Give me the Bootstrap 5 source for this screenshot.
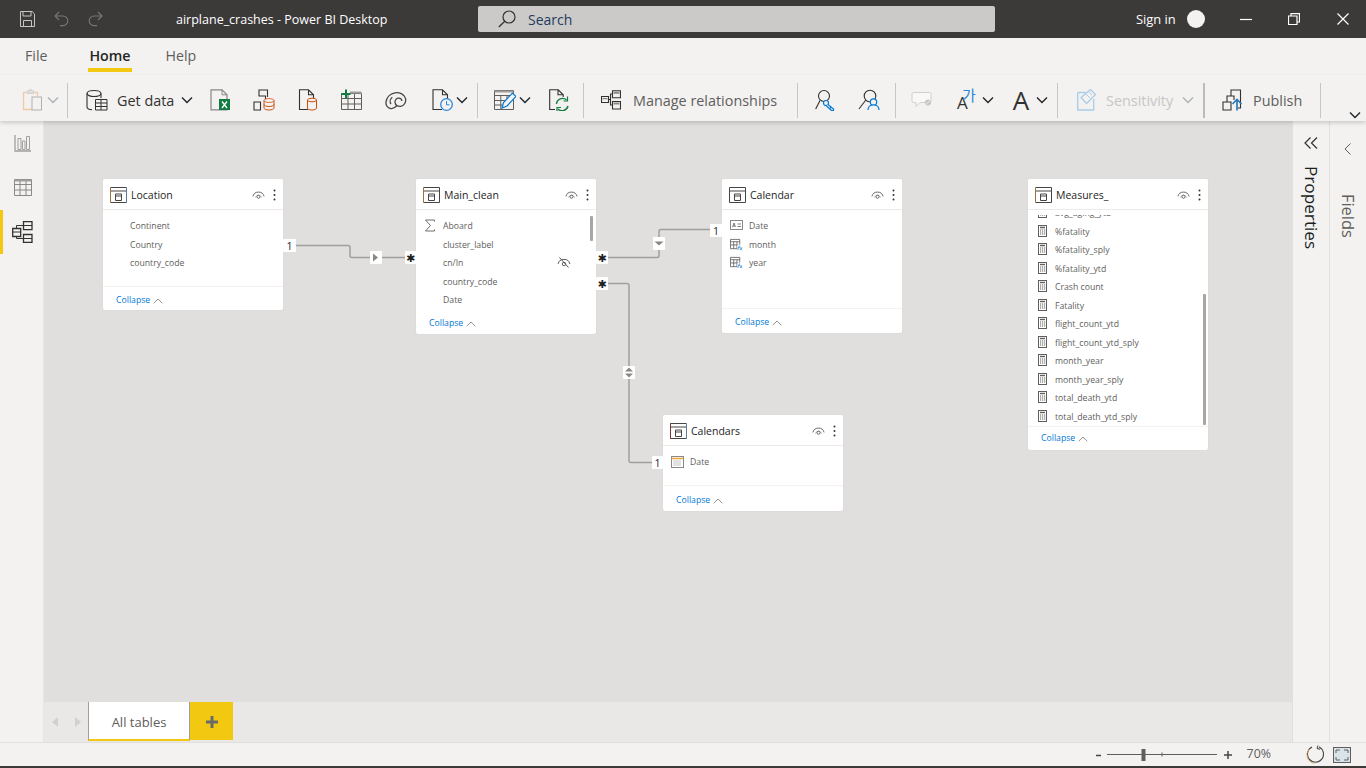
<!DOCTYPE html>
<html lang="en">
<head>
<meta charset="utf-8">
<title>airplane_crashes - Power BI Desktop</title>
<link href="https://cdn.jsdelivr.net/npm/bootstrap@5.3.0/dist/css/bootstrap.min.css" rel="stylesheet">
<style>
html,body{height:100%}
body{font-family:"Open Sans","Noto Sans",sans-serif;background:#f3f2f1;color:#252423;overflow:hidden}
svg{display:block;flex:none}
.titlebar{height:38px;background:#3b3a39;color:#fff;font-size:12.5px;flex:none}
.tb-ic{margin-left:20px;margin-right:19px}
.tb-ic+.tb-ic{margin-left:0}
.tb-title{margin-left:54px;width:302px;white-space:nowrap;padding-top:3px}
.searchbox{width:517px;height:26px;background:#cbcac8;border-radius:2px;color:#243a5e;font-size:14px;padding-left:20px;gap:12px;margin-top:0}
.searchbox span{padding-top:1px}
.signin{margin-left:141px;font-size:12.900px;width:51px;white-space:nowrap;padding-top:1px}
.avatar{width:18px;height:18px;border-radius:50%;background:#f3f2f1}
.winbtn{margin-left:35px}
.winbtn.mid{margin-left:36px}
.winbtn.last{margin-left:37px}
.tabrow{height:37px;flex:none;font-size:14.2px;padding-left:25px;color:#605e5c}
.tabitem{position:relative;height:37px;line-height:36px}
.tabitem.active{color:#252423;font-weight:600;margin-left:42px;margin-right:35px}
.tabitem.active::after{content:"";position:absolute;left:-1px;right:-1px;top:30px;height:4px;background:#f2c811}
.ribbon{height:46px;flex:none;padding-left:22px;padding-top:4px;position:relative;z-index:3;box-shadow:0 2px 4px rgba(0,0,0,.16);background:#f3f2f1;font-size:14.4px}
.rsep{width:1px;height:35px;background:#c8c6c4;flex:none}
.rsep.thick{width:2px;background:#bdbbb9}
.rtext{white-space:nowrap;flex:none;color:#323130;padding-top:1px}
.rtext.muted{color:#605e5c}
.rtext.off{color:#c8c6c4}
.w58{width:58px}.w146{width:146px}.w69{width:69px}.w50{width:50px}
.m2{margin-left:2px}.m3{margin-left:3px}.m5{margin-left:5px}.m6{margin-left:6px}.m7{margin-left:7px}.m8{margin-left:8px}.m9{margin-left:9px}.m12{margin-left:12px}.m14{margin-left:14px}.m15{margin-left:15px}.m16{margin-left:16px}.m17{margin-left:17px}.m18{margin-left:18px}.m19{margin-left:19px}.m21{margin-left:21px}.m23{margin-left:23px}.m24{margin-left:24px}.m25{margin-left:25px}.m35{margin-left:35px}
.ribbon-more{position:absolute;right:5px;bottom:2px}
.glyph-ko{width:20px;height:22px;position:relative;flex:none}
.glyph-ko .a{position:absolute;left:0;top:3px;font-size:17px;line-height:22px;color:#323130;font-family:"Open Sans",sans-serif}
.glyph-ko .k{position:absolute;left:5px;top:-3px;font-size:15px;line-height:18px;color:#2b88d8;font-family:"Noto Sans CJK KR",sans-serif}
.glyph-a{width:18px;height:26px;flex:none;font-size:26px;line-height:26px;color:#323130;text-align:center}
.rail{width:44px;flex:none;background:#f3f2f1;border-right:1px solid #e6e5e3}
.railbtn{height:44px;position:relative;padding-left:2px}
.railbtn.on{margin-top:1px}
.railbtn.on::before{content:"";position:absolute;left:0;top:0;bottom:0;width:3px;background:#f2c811}
.mainrow{min-height:0}
.centercol{min-width:0}
.diagram{position:relative;background:#e0dfdd;overflow:hidden}
.wires{position:absolute;left:0;top:0}
.wire{fill:none;stroke:#a19f9d;stroke-width:1.5}
.badgebox{fill:#fff}
.cardtxt{font-family:"Open Sans",sans-serif;font-size:10.500px;fill:#252423;text-anchor:middle}
.startxt{font-family:"DejaVu Sans",sans-serif;font-size:11px;fill:#201f1e;text-anchor:middle}
.tbl{position:absolute;width:180px;border:0;border-radius:2px;background:#fff;box-shadow:0 0 1px rgba(0,0,0,.12);overflow:hidden}
.tbl-location{left:59px;top:58px;height:131px}
.tbl-main{left:372px;top:58px;height:155px}
.tbl-calendar{left:678px;top:58px;height:154px}
.tbl-calendars{left:619px;top:294px;height:96px}
.tbl-measures{left:984px;top:58px;height:271px}
.tbl .card-header{height:31px;background:#fff;border-bottom:1px solid #edebe9;border-radius:0;padding:1px 0 0 7px;font-size:10.500px;color:#252423;flex:none}
.tbl-title{margin-left:4px;padding-top:2px}
.tbl-eye{margin-left:auto}
.tbl-dots{margin-left:8px;margin-right:7px}
.tbl-body{flex:1 1 auto;min-height:0;position:relative;overflow:hidden;padding:7px 0 0 0}
.frow{height:18.5px;padding-left:27px;font-size:8.7px;line-height:18.5px;color:#605e5c;position:relative;white-space:nowrap}
.frow svg{position:absolute;left:8px;top:2px}
.frow .hid{left:141px;top:2px}
.tbl-measures .tbl-body{padding-top:0;margin-top:5px}
.tbl-measures .frow:first-child{margin-top:-11px}
.tbl-measures .frow svg{left:10px}
.tbl-foot{height:24px;flex:none;border-top:1px solid #f3f2f1;padding-left:13px;padding-top:4px;font-size:8.7px;color:#0078d4;gap:3px}
.tbl-calendar .tbl-foot{height:25px;padding-top:3px}
.tbl-calendars .tbl-foot{height:26px}
.tbl-main .tbl-foot{border-top:0;height:23px;padding-top:2px}
.tbl-measures .tbl-foot{height:24px;padding-top:1px}
.thumb{position:absolute;background:#a8a6a4;width:3px;border-radius:1px}
.thumb-main{left:174px;top:6px;height:25px}
.thumb-meas{left:175px;top:79px;height:131px}
.sheetbar{height:40px;flex:none;background:#e9e8e7;border-top:0}
.sheetnav{width:44px;gap:15px;padding-left:7px}
.sheettab{width:102px;height:39px;background:#fff;border-left:1px solid #a19f9d;border-right:1px solid #a19f9d;border-bottom:2px solid #f2c811;font-size:13px;color:#605e5c;padding-top:4px}
.sheetadd{width:43px;height:38px;background:#f2c811;padding-top:2px}
.sidepane{width:37px;flex:none;background:#f3f2f1;border-left:1px solid #e1dfdd;position:relative}
.vtext{writing-mode:vertical-rl;white-space:nowrap;line-height:1}
.vprops{font-size:17.200px;color:#201f1e;margin-top:17px}
.vfields{font-size:16.400px;color:#605e5c;margin-top:39px}
.chev-fields{margin-top:22px;margin-right:1px}
.statusbar{height:24px;flex:none;background:#f3f2f1;border-top:1px solid #e1dfdd;font-size:12.400px;color:#605e5c;padding-right:15px}
.bottomedge{height:2px;flex:none;background:#3b3a39}
</style>
</head>
<body class="d-flex flex-column">

<svg width="0" height="0" class="position-absolute">
 <defs>
  <symbol id="eye" viewBox="0 0 14 10"><path d="M1 6.500a6.200 6.200 0 0 1 12 0" fill="none" stroke="#605e5c"/><path d="M3.400 8a3.800 3.800 0 0 1 7.200 0" fill="none" stroke="#a19f9d" stroke-width=".7"/><circle cx="7" cy="6.800" r="1.700" fill="none" stroke="#605e5c"/></symbol>
  <symbol id="dots" viewBox="0 0 3 12"><circle cx="1.500" cy="1.500" r="1" fill="#323130"/><circle cx="1.500" cy="6" r="1" fill="#323130"/><circle cx="1.500" cy="10.500" r="1" fill="#323130"/></symbol>
  <symbol id="calc" viewBox="0 0 10 12"><rect x=".5" y=".5" width="8" height="11" fill="#fff" stroke="#605e5c"/><path d="M2 2.500h5" stroke="#605e5c" stroke-width="1.400"/><path d="M2 5h1.200M4 5h1.200M6 5h1.200M2 7h1.200M4 7h1.200M6 7h1.200M2 9h1.200M4 9h1.200M6 9h1.200" stroke="#605e5c"/></symbol>
  <symbol id="fx" viewBox="0 0 14 14"><path d="M.5 1.500h10v10h-10zM.5 4h10M4 4v7.500M7.500 4v7.500M.5 7.500h10" fill="none" stroke="#605e5c" stroke-width=".9"/><path d="M8 7h6v7H8z" fill="#fff"/><path d="M11 8.500c-1.300-.3-1.400.6-1.500 2s-.3 2.400-1.500 2M8.500 10h2.200M11 10l2 3M13 10l-2 3" fill="none" stroke="#2b88d8" stroke-width=".8"/></symbol>
  <symbol id="up" viewBox="0 0 10 6"><path d="M.7 5.200 5 1l4.300 4.200" fill="none" stroke="#8a8886" stroke-width=".9"/></symbol>
  <symbol id="chev" viewBox="0 0 12 8"><path d="M1 1.500 6 6.500l5-5" fill="none" stroke="currentColor" stroke-width="1.400"/></symbol>
 </defs>
</svg>

<header class="titlebar d-flex align-items-center">
 <svg class="tb-ic" width="15" height="16" viewBox="0 0 15 16"><path d="M.5.500h11.600l2.400 2.400v12.600H.5z" fill="none" stroke="#c8c6c4"/><path d="M3 .5v4.500h8V.5M3.500 15.500V9.500h8v6" fill="none" stroke="#c8c6c4"/></svg>
 <svg class="tb-ic" width="15" height="16" viewBox="0 0 15 16"><path d="M5 1 1 5l4 4M1 5h8a4.800 4.800 0 0 1 0 9.600H6" fill="none" stroke="#797775" stroke-width="1.100"/></svg>
 <svg class="tb-ic" width="15" height="16" viewBox="0 0 15 16"><path d="M10 1l4 4-4 4M14 5H6a4.800 4.800 0 0 0 0 9.600h3" fill="none" stroke="#797775" stroke-width="1.100"/></svg>
 <span class="tb-title">airplane_crashes - Power BI Desktop</span>
 <div class="searchbox d-flex align-items-center">
  <svg width="18" height="18" viewBox="0 0 18 18"><circle cx="11" cy="7" r="6" fill="none" stroke="#323130" stroke-width="1.200"/><path d="M6.800 11.200.8 17" stroke="#323130" stroke-width="1.300"/></svg>
  <span>Search</span>
 </div>
 <span class="signin">Sign in</span>
 <span class="avatar"></span>
 <svg class="winbtn" width="12" height="12" viewBox="0 0 12 12"><path d="M0 6.500h12" stroke="#fff" stroke-width="1.200"/></svg>
 <svg class="winbtn mid" width="12" height="12" viewBox="0 0 12 12"><path d="M.5 3h8.500v8.500H.5zM3 3V.7h8.500V9H9" fill="none" stroke="#fff" stroke-width="1.200"/></svg>
 <svg class="winbtn last" width="12" height="12" viewBox="0 0 12 12"><path d="M.5.500l11 11M11.500.500l-11 11" stroke="#fff" stroke-width="1.200"/></svg>
</header>

<nav class="tabrow d-flex">
 <span class="tabitem">File</span>
 <span class="tabitem active">Home</span>
 <span class="tabitem">Help</span>
</nav>

<div class="ribbon d-flex align-items-center">
 <svg width="22" height="22" viewBox="0 0 22 22"><path d="M4 3.500H1.500v17H10M13 3.500h2.500V7" fill="none" stroke="#f0c9a5" stroke-width="1.300"/><path d="M5 4.500V2h2V.8h3V2h2v2.500z" fill="#e1dfdd" stroke="#d2d0ce"/><rect x="10" y="8" width="9.500" height="13" fill="#f3f2f1" stroke="#b3b0ad"/></svg>
 <svg class="m3 text-secondary opacity-50" width="12" height="8"><use href="#chev"/></svg>
 <span class="rsep m8"></span>
 <svg class="m18" width="22" height="22" viewBox="0 0 22 22"><ellipse cx="8" cy="4.500" rx="7" ry="3" fill="none" stroke="#323130" stroke-width="1.100"/><path d="M1 4.500V18c0 1.500 2.500 2.500 5 2.800M15 4.500V9" fill="none" stroke="#323130" stroke-width="1.100"/><path d="M9.500 10.500h11.500v10.500H9.500zM9.500 14h11.500M15 10.500v10.500M9.500 17.500h11.500" fill="#f3f2f1" stroke="#323130"/></svg>
 <span class="rtext w58 m9">Get data</span>
 <svg class="m6 text-dark" width="12" height="8"><use href="#chev"/></svg>
 <svg class="m17" width="22" height="22" viewBox="0 0 22 22"><path d="M1 .8h11l5 5v15H1z" fill="none" stroke="#8a8886" stroke-width="1.200"/><path d="M12 .8v5h5" fill="none" stroke="#8a8886"/><rect x="9" y="10" width="11" height="11" fill="#107c41"/><path d="M12 12.500l5 6.500M17 12.500l-5 6.500" stroke="#fff" stroke-width="1.300"/></svg>
 <svg class="m21" width="22" height="22" viewBox="0 0 22 22"><path d="M6 7V1h8.500v7M1 13h6.500v8H1zM5.500 7h7v6M1 21h6" fill="none" stroke="#323130" stroke-width="1.100"/><ellipse cx="16" cy="11.500" rx="5" ry="2" fill="#f3f2f1" stroke="#d83b01" stroke-opacity=".7"/><path d="M11 11.500V19c0 1.100 2.200 2 5 2s5-.9 5-2v-7.500M11 15.500c0 1.100 2.200 2 5 2s5-.9 5-2" fill="none" stroke="#ca5010"/></svg>
 <svg class="m23" width="22" height="22" viewBox="0 0 22 22"><path d="M10 20.500H1.500V.8h9l5 5V9M10.500.8v5h5" fill="none" stroke="#323130" stroke-width="1.100"/><ellipse cx="14" cy="11" rx="4.500" ry="1.800" fill="#f3f2f1" stroke="#ca5010"/><path d="M9.500 11v8.200c0 1 2 1.800 4.500 1.800s4.500-.8 4.500-1.800V11" fill="none" stroke="#ca5010"/></svg>
 <svg class="m21" width="21" height="22" viewBox="0 0 21 22"><path d="M.5 4.500h20v16H.5zM.5 9.500h20M.5 15h20M7 4.500v16M13.500 4.500v16" fill="none" stroke="#605e5c"/><path d="M9 2.500h11.500v2H9" fill="#a19f9d"/><path d="M5 .5v9M.5 5h9" stroke="#107c41" stroke-width="2"/></svg>
 <svg class="m23" width="22" height="22" viewBox="0 0 22 22"><path d="M12 16.500c-2.500 2.800-5 3.500-7 2.800-3-1-4.500-4-3.800-7.300C2 8 5.500 4.500 10 3.800c4.800-.7 9.500 1.700 10.500 5.500.9 3.700-1.300 7.400-4.800 8-2.800.5-5.500-1.300-5.700-3.900-.2-2.300 1.500-4.200 3.600-4.200 1.800 0 3.200 1.300 3.200 2.900" fill="none" stroke="#484644" stroke-width="1.300"/><path d="M6 15c-1.500-2-1-5 1.300-6.800" fill="none" stroke="#484644" stroke-width="1.300"/></svg>
 <svg class="m25" width="22" height="22" viewBox="0 0 22 22"><path d="M10 20.500H1V.8h9.500l5 5v5M10.500.8v5h5" fill="none" stroke="#323130" stroke-width="1.100"/><circle cx="14.500" cy="15.500" r="5.800" fill="#f3f2f1" stroke="#2b88d8" stroke-width="1.300"/><path d="M14.500 12v3.800h3" fill="none" stroke="#2b88d8"/></svg>
 <svg class="m2 text-dark" width="12" height="8"><use href="#chev"/></svg>
 <span class="rsep m9"></span>
 <svg class="m16" width="22" height="22" viewBox="0 0 22 22"><path d="M.5 1.500h19v19H.5zM.5 6.500h19M.5 11.500h12M.5 16h8M6.800 6.500v14M13 6.500v5" fill="none" stroke="#605e5c"/><path d="M.5 1.500h19v2H.5" fill="#a19f9d"/><path d="M8 19l1.500-5.500 9-9.500 3.500 3.500-9 9.500z" fill="#f3f2f1" stroke="#0078d4" stroke-width="1.200"/></svg>
 <svg class="m3 text-dark" width="12" height="8"><use href="#chev"/></svg>
 <svg class="m18" width="20" height="22" viewBox="0 0 20 22"><path d="M6 20.500H.7V.8h8.500l5 5V8M9 .8v5h5" fill="none" stroke="#323130" stroke-width="1.100"/><path d="M7.500 15a6 6 0 0 1 10-4M19 17a6 6 0 0 1-10 3" fill="none" stroke="#107c41" stroke-width="1.400"/><path d="M18.500 7.500V12h-4M8 23v-4.500h4" fill="none" stroke="#107c41" stroke-width="1.200"/></svg>
 <span class="rsep m14"></span>
 <svg class="m17" width="20" height="20" viewBox="0 0 20 20"><path d="M.5 6.500h7v6h-7zM11.500.8h8v7h-8zM11.500 11.500h8v7.500h-8zM7.500 9.500h2V4h2M9.500 9.500V15h2" fill="none" stroke="#323130" stroke-width="1.100"/><path d="M12.500 1.800h6v2h-6zM12.500 12.500h6v2h-6zM1.500 8h5v1.200h-5z" fill="#8a8886"/></svg>
 <span class="rtext muted w146 m12">Manage relationships</span>
 <span class="rsep m18"></span>
 <svg class="m17" width="20" height="22" viewBox="0 0 20 22"><circle cx="9" cy="7" r="5.500" fill="none" stroke="#323130" stroke-width="1.100"/><path d="M5 11.500.7 20" fill="none" stroke="#323130" stroke-width="1.100"/><circle cx="11" cy="14" r="2.500" fill="#f3f2f1" stroke="#0078d4" stroke-width="1.200"/><path d="M13 15.500l5.500 4.500v1.500h-2l-5-4.500M16 18l-1 1.300" fill="#f3f2f1" stroke="#0078d4" stroke-width="1.200"/></svg>
 <svg class="m23" width="22" height="22" viewBox="0 0 22 22"><circle cx="12" cy="7" r="5.800" fill="none" stroke="#323130" stroke-width="1.100"/><path d="M7.800 11 1 20" fill="none" stroke="#323130" stroke-width="1.100"/><circle cx="15.500" cy="13" r="3.200" fill="#f3f2f1" stroke="#0078d4" stroke-width="1.200"/><path d="M10 21c0-3.500 2.500-5 5.500-5s5.500 1.500 5.500 5" fill="#f3f2f1" stroke="#0078d4" stroke-width="1.200"/></svg>
 <span class="rsep m15"></span>
 <svg class="m15" width="22" height="22" viewBox="0 0 22 22"><path d="M2.500 3.500h16a1.500 1.500 0 0 1 1.500 1.500v7a1.500 1.500 0 0 1-1.500 1.500H9l-4 4v-4H2.500A1.500 1.500 0 0 1 1 12V5a1.500 1.500 0 0 1 1.500-1.500z" fill="#f9f8f7" stroke="#d2d0ce"/><circle cx="17" cy="13.500" r="3" fill="#c8c6c4"/><path d="M15 15.500l4-4" stroke="#f3f2f1"/></svg>
 <span class="glyph-ko m24"><span class="a">A</span><span class="k">가</span></span>
 <svg class="m5 text-dark" width="12" height="8"><use href="#chev"/></svg>
 <span class="glyph-a m18">A</span>
 <svg class="m6 text-dark" width="12" height="8"><use href="#chev"/></svg>
 <span class="rsep m9"></span>
 <svg class="m19" width="20" height="22" viewBox="0 0 20 22"><path d="M.7 3.500h8M.7 3.500v17.500h16V10" fill="none" stroke="#a9cde8" stroke-width="1.300"/><path d="M4 8.500l5.500 6 9-9-5-5z" fill="#f3f2f1" stroke="#a9cde8" stroke-width="1.300"/><path d="M9 5l4 4M12 3l3 3" stroke="#a9cde8"/></svg>
 <span class="rtext off w69 m9">Sensitivity</span>
 <svg class="m7 text-secondary opacity-50" width="12" height="8"><use href="#chev"/></svg>
 <span class="rsep thick m9"></span>
 <svg class="m17" width="22" height="22" viewBox="0 0 22 22"><path d="M1 13h8v8H1zM5 13V7h7v4M9 7V1h9.500v18H16" fill="none" stroke="#323130" stroke-width="1.100"/><path d="M15 21.500V11M10.500 15l4.500-4.500 4.500 4.500" fill="none" stroke="#2b7cb8" stroke-width="1.700"/></svg>
 <span class="rtext muted w50 m9">Publish</span>
 <span class="rsep m17"></span>
 <svg class="ribbon-more text-dark" width="12" height="8"><use href="#chev"/></svg>
</div>

<main class="mainrow d-flex flex-grow-1">
 <aside class="rail d-flex flex-column">
  <div class="railbtn d-flex align-items-center justify-content-center">
   <svg width="17" height="17" viewBox="0 0 17 17"><path d="M1 0v16h16" fill="none" stroke="#a19f9d" stroke-width="1.300"/><path d="M4 3.500h3v11H4zM8.500 6h2.500v8.500H8.500zM12.500 1.500h3v13h-3z" fill="none" stroke="#a19f9d"/></svg>
  </div>
  <div class="railbtn d-flex align-items-center justify-content-center">
   <svg width="18" height="17" viewBox="0 0 18 17"><path d="M.5.500h17v16H.5zM.5 5.500h17M.5 11h17M6 .500v16M12 .500v16" fill="none" stroke="#8a8886"/><path d="M.5.500h17v2H.5z" fill="#a19f9d"/></svg>
  </div>
  <div class="railbtn on d-flex align-items-center justify-content-center">
   <svg width="21" height="22" viewBox="0 0 21 22"><path d="M.7 7.500h8v8h-8zM11.500.7h8.500v8h-8.500zM11.500 13.500h8.500v8h-8.500z" fill="none" stroke="#323130" stroke-width="1.300"/><path d="M1 11h7.500M12 4.500h8M12 17.500h8M4.500 7V4.500h7M4.500 15.500v2h7" fill="none" stroke="#323130"/></svg>
  </div>
 </aside>

 <div class="centercol d-flex flex-column flex-grow-1">
  <section class="diagram flex-grow-1">

   <div class="card tbl tbl-location d-flex flex-column">
    <div class="card-header d-flex align-items-center">
     <svg width="17" height="16" viewBox="0 0 17 16"><path d="M.5.500h16v15H.5zM.5 4h16" fill="none" stroke="#484644"/><path d="M5.500 7h6v6.500h-6zM5.500 9h6" fill="none" stroke="#484644"/><path d="M0 0v16" stroke="#e8a33d"/><path d="M17 0v16" stroke="#6cb2e8"/></svg>
     <span class="tbl-title">Location</span>
     <svg class="tbl-eye" width="13" height="10"><use href="#eye"/></svg>
     <svg class="tbl-dots" width="3" height="12"><use href="#dots"/></svg>
    </div>
    <div class="tbl-body">
     <div class="frow">Continent</div>
     <div class="frow">Country</div>
     <div class="frow">country_code</div>
    </div>
    <div class="tbl-foot d-flex align-items-center">Collapse <svg width="10" height="6"><use href="#up"/></svg></div>
   </div>

   <div class="card tbl tbl-main d-flex flex-column">
    <div class="card-header d-flex align-items-center">
     <svg width="17" height="16" viewBox="0 0 17 16"><path d="M.5.500h16v15H.5zM.5 4h16" fill="none" stroke="#484644"/><path d="M5.500 7h6v6.500h-6zM5.500 9h6" fill="none" stroke="#484644"/><path d="M0 0v16" stroke="#e8a33d"/></svg>
     <span class="tbl-title">Main_clean</span>
     <svg class="tbl-eye" width="13" height="10"><use href="#eye"/></svg>
     <svg class="tbl-dots" width="3" height="12"><use href="#dots"/></svg>
    </div>
    <div class="tbl-body">
     <div class="frow"><svg width="12" height="13" viewBox="0 0 12 13"><path d="M10.500 2.500V1H1.500L6.500 6.500 1.500 12h9v-1.500" fill="none" stroke="#605e5c" stroke-width=".9"/></svg>Aboard</div>
     <div class="frow">cluster_label</div>
     <div class="frow">cn/In<svg class="hid" width="14" height="13" viewBox="0 0 14 13"><path d="M1 8a6.200 6.200 0 0 1 12 0" fill="none" stroke="#605e5c"/><circle cx="7" cy="8" r="1.700" fill="none" stroke="#605e5c"/><path d="M2.500 1.500l9 10" stroke="#605e5c"/></svg></div>
     <div class="frow">country_code</div>
     <div class="frow">Date</div>
     <div class="thumb thumb-main"></div>
    </div>
    <div class="tbl-foot d-flex align-items-center">Collapse <svg width="10" height="6"><use href="#up"/></svg></div>
   </div>

   <div class="card tbl tbl-calendar d-flex flex-column">
    <div class="card-header d-flex align-items-center">
     <svg width="17" height="16" viewBox="0 0 17 16"><path d="M.5.500h16v15H.5zM.5 4h16" fill="none" stroke="#484644"/><path d="M5.500 7h6v6.500h-6zM5.500 9h6" fill="none" stroke="#484644"/></svg>
     <span class="tbl-title">Calendar</span>
     <svg class="tbl-eye" width="13" height="10"><use href="#eye"/></svg>
     <svg class="tbl-dots" width="3" height="12"><use href="#dots"/></svg>
    </div>
    <div class="tbl-body">
     <div class="frow"><svg width="13" height="12" viewBox="0 0 13 12"><rect x=".5" y="1.500" width="12" height="9" fill="none" stroke="#8a8886"/><path d="M2.500 8l1.500-4 1.500 4M3 7h2M7.500 5h3.500M7.500 7.500h3.500" fill="none" stroke="#605e5c" stroke-width=".8"/></svg>Date</div>
     <div class="frow"><svg width="13" height="13"><use href="#fx"/></svg>month</div>
     <div class="frow"><svg width="13" height="13"><use href="#fx"/></svg>year</div>
    </div>
    <div class="tbl-foot d-flex align-items-center">Collapse <svg width="10" height="6"><use href="#up"/></svg></div>
   </div>

   <div class="card tbl tbl-calendars d-flex flex-column">
    <div class="card-header d-flex align-items-center">
     <svg width="17" height="16" viewBox="0 0 17 16"><path d="M.5.500h16v15H.5zM.5 4h16" fill="none" stroke="#484644"/><path d="M5.500 7h6v6.500h-6zM5.500 9h6" fill="none" stroke="#484644"/><path d="M0 0v16" stroke="#a4262c"/><path d="M17 0v16" stroke="#6cb2e8"/></svg>
     <span class="tbl-title">Calendars</span>
     <svg class="tbl-eye" width="13" height="10"><use href="#eye"/></svg>
     <svg class="tbl-dots" width="3" height="12"><use href="#dots"/></svg>
    </div>
    <div class="tbl-body">
     <div class="frow"><svg width="13" height="13" viewBox="0 0 13 13"><rect x=".5" y="1.500" width="12" height="11" fill="none" stroke="#8a8886"/><path d="M.5 3.500h12" stroke="#e8a33d" stroke-width="1.500"/><path d="M2.500 6h8M2.500 8h8M2.500 10h8" stroke="#8a8886" stroke-dasharray="1 1"/></svg>Date</div>
    </div>
    <div class="tbl-foot d-flex align-items-center">Collapse <svg width="10" height="6"><use href="#up"/></svg></div>
   </div>

   <div class="card tbl tbl-measures d-flex flex-column">
    <div class="card-header d-flex align-items-center">
     <svg width="17" height="16" viewBox="0 0 17 16"><path d="M.5.500h16v15H.5zM.5 4h16" fill="none" stroke="#484644"/><path d="M5.500 7h6v6.500h-6zM5.500 9h6" fill="none" stroke="#484644"/><path d="M0 0v16" stroke="#e8a33d"/></svg>
     <span class="tbl-title">Measures_</span>
     <svg class="tbl-eye" width="13" height="10"><use href="#eye"/></svg>
     <svg class="tbl-dots" width="3" height="12"><use href="#dots"/></svg>
    </div>
    <div class="tbl-body">
     <div class="frow"><svg width="10" height="12"><use href="#calc"/></svg>avg_aging_ytd</div>
     <div class="frow"><svg width="10" height="12"><use href="#calc"/></svg>%fatality</div>
     <div class="frow"><svg width="10" height="12"><use href="#calc"/></svg>%fatality_sply</div>
     <div class="frow"><svg width="10" height="12"><use href="#calc"/></svg>%fatality_ytd</div>
     <div class="frow"><svg width="10" height="12"><use href="#calc"/></svg>Crash count</div>
     <div class="frow"><svg width="10" height="12"><use href="#calc"/></svg>Fatality</div>
     <div class="frow"><svg width="10" height="12"><use href="#calc"/></svg>flight_count_ytd</div>
     <div class="frow"><svg width="10" height="12"><use href="#calc"/></svg>flight_count_ytd_sply</div>
     <div class="frow"><svg width="10" height="12"><use href="#calc"/></svg>month_year</div>
     <div class="frow"><svg width="10" height="12"><use href="#calc"/></svg>month_year_sply</div>
     <div class="frow"><svg width="10" height="12"><use href="#calc"/></svg>total_death_ytd</div>
     <div class="frow"><svg width="10" height="12"><use href="#calc"/></svg>total_death_ytd_sply</div>
     <div class="thumb thumb-meas"></div>
    </div>
    <div class="tbl-foot d-flex align-items-center">Collapse <svg width="10" height="6"><use href="#up"/></svg></div>
   </div>

   <svg class="wires" width="1248" height="582" viewBox="44 121 1248 582">
    <path class="wire" d="M296 245.500h52q2 0 2 2v8q0 2 2 2h53"/>
    <path class="wire" d="M608 257.500h49q2 0 2-2v-24q0-2 2-2h49"/>
    <path class="wire" d="M608 283.500h19q2 0 2 2v175q0 2 2 2h21"/>
    <rect class="badgebox" x="283" y="239" width="13" height="13" rx="1"/><text class="cardtxt" x="289.500" y="249.500">1</text>
    <rect class="badgebox" x="370" y="251" width="12" height="13" rx="1"/><path d="M373 253.500l5 4-5 4z" fill="#8a8886"/>
    <rect class="badgebox" x="405" y="251" width="11" height="13" rx="1"/><text class="startxt" x="410.500" y="261.500">✱</text>
    <rect class="badgebox" x="596" y="251" width="12" height="13" rx="1"/><text class="startxt" x="602" y="261.500">✱</text>
    <rect class="badgebox" x="653" y="237" width="12" height="13" rx="1"/><path d="M654.500 241.500h9l-4.500 4z" fill="#8a8886"/>
    <rect class="badgebox" x="710" y="224" width="12" height="13" rx="1"/><text class="cardtxt" x="716" y="234.500">1</text>
    <rect class="badgebox" x="596" y="277" width="12" height="13" rx="1"/><text class="startxt" x="602" y="287.500">✱</text>
    <rect class="badgebox" x="623" y="366" width="12" height="13" rx="1"/><path d="M625 371.500h8l-4-4zM625 373.500h8l-4 4z" fill="#8a8886"/>
    <rect class="badgebox" x="652" y="456" width="11" height="13" rx="1"/><text class="cardtxt" x="657.500" y="466.500">1</text>
   </svg>
  </section>

  <div class="sheetbar d-flex align-items-start">
   <div class="sheetnav d-flex align-items-center h-100">
    <svg width="8" height="12" viewBox="0 0 8 12"><path d="M7 1v10L1 6z" fill="#d2d0ce"/></svg>
    <svg width="8" height="12" viewBox="0 0 8 12"><path d="M1 1v10l6-5z" fill="#d2d0ce"/></svg>
   </div>
   <div class="sheettab d-flex align-items-center justify-content-center">All tables</div>
   <div class="sheetadd d-flex align-items-center justify-content-center">
    <svg width="12" height="12" viewBox="0 0 12 12"><path d="M6 0v12M0 6h12" stroke="#6b6a69" stroke-width="3"/></svg>
   </div>
  </div>
 </div>

 <aside class="sidepane d-flex flex-column align-items-center">
  <svg class="mt-3" width="14" height="12" viewBox="0 0 14 12"><path d="M6.500 .5 1 6l5.500 5.500M13 .5 7.500 6l5.500 5.500" fill="none" stroke="#323130" stroke-width="1.200"/></svg>
  <span class="vtext vprops">Properties</span>
 </aside>
 <aside class="sidepane d-flex flex-column align-items-center">
  <svg class="chev-fields" width="8" height="12" viewBox="0 0 8 12"><path d="M6.500 .5 1 6l5.500 5.500" fill="none" stroke="#605e5c" stroke-width="1"/></svg>
  <span class="vtext vfields">Fields</span>
 </aside>
</main>

<footer class="statusbar d-flex align-items-center justify-content-end">
 <svg width="122" height="14" viewBox="0 0 122 14"><path d="M0 7.500h5" stroke="#484644" stroke-width="1.500"/><path d="M11 6.500h110" stroke="#605e5c"/><rect x="45.500" y="1" width="4" height="12" fill="#605e5c"/><path d="M66 4.500v4" stroke="#605e5c"/></svg>
 <svg class="m5" width="10" height="10" viewBox="0 0 10 10"><path d="M5 1v8M1 5h8" stroke="#484644" stroke-width="1.500"/></svg>
 <span class="m14">70%</span>
 <svg class="m35" width="18" height="19" viewBox="0 0 18 19"><path d="M6 2a8 8 0 1 0 7 0" fill="none" stroke="#484644" stroke-width="1.100"/><path d="M3 4.500A8 8 0 0 0 9 18" fill="none" stroke="#d9a463" stroke-width=".8"/><path d="M11 3.500l1-3M11 3.500l3 .8" fill="none" stroke="#484644"/></svg>
 <svg class="m9" width="18" height="16" viewBox="0 0 18 16"><rect x=".5" y=".5" width="17" height="15" fill="#d9e3ea" stroke="#605e5c"/><path d="M3 6V3h4M11 3h4v3M15 10v3h-4M7 13H3v-3" fill="none" stroke="#605e5c"/></svg>
</footer>
<div class="bottomedge"></div>

</body>
</html>
